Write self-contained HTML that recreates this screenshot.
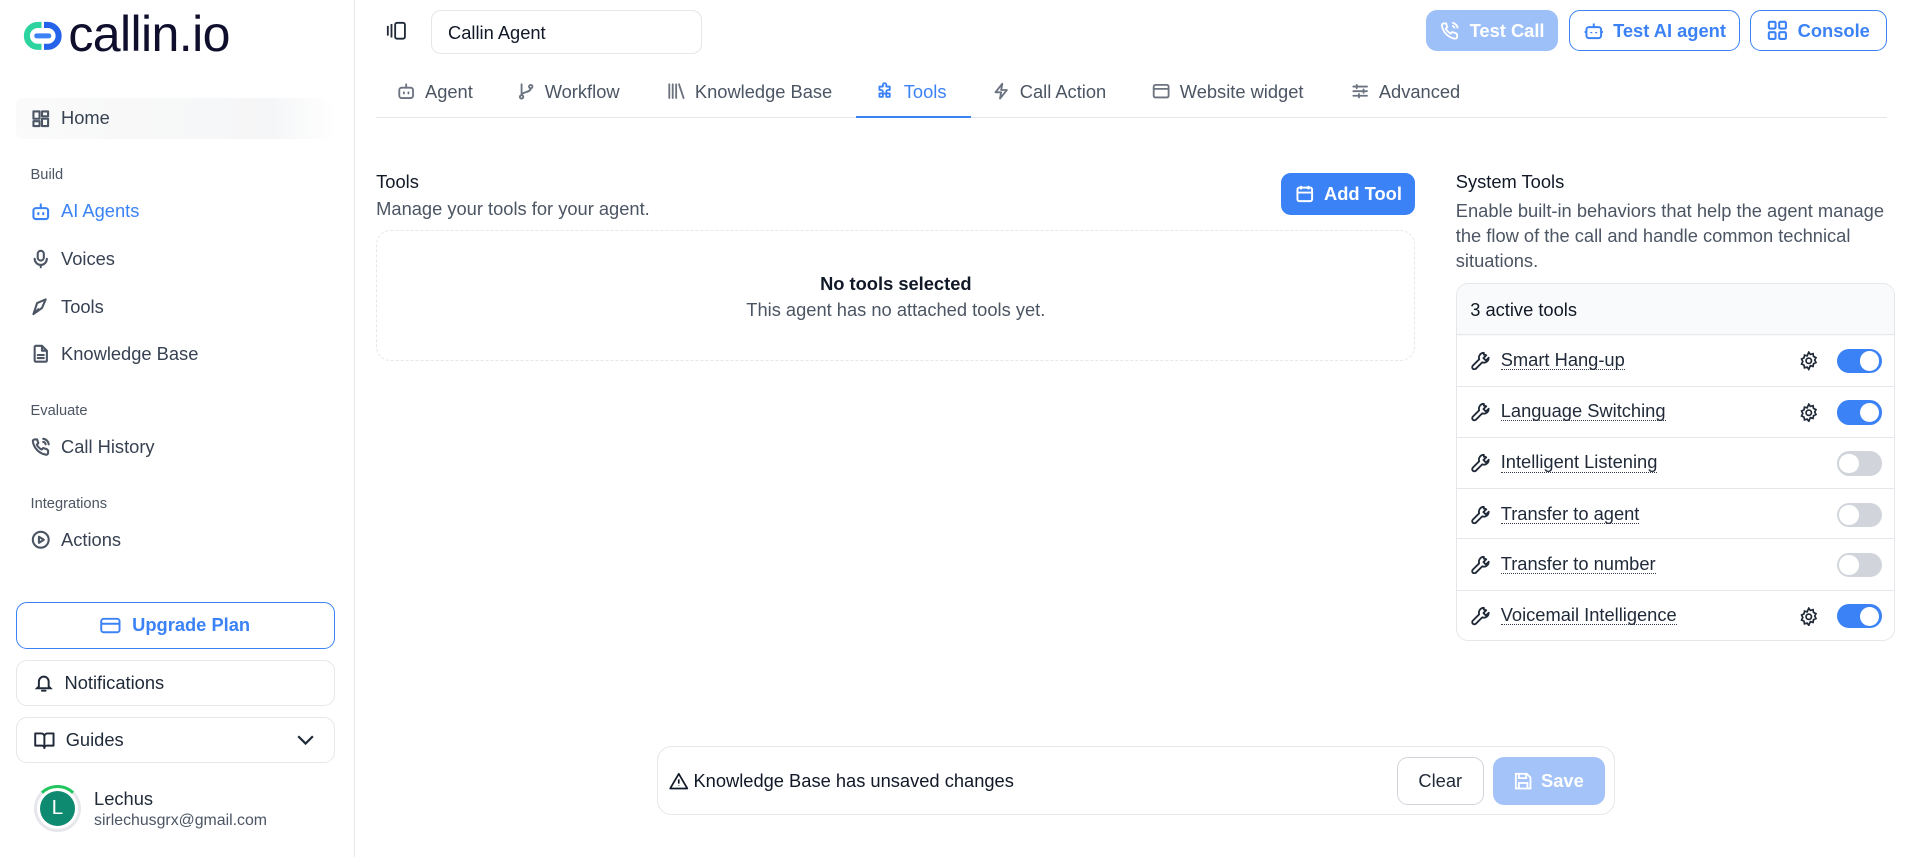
<!DOCTYPE html>
<html><head><meta charset="utf-8"><style>
*{box-sizing:border-box;margin:0;padding:0}
html,body{width:1915px;height:857px;overflow:hidden;background:#fff}
#w{zoom:1.22130;width:1568px;height:702px;position:relative;font-family:"Liberation Sans",sans-serif;color:#1f2937}
.a{position:absolute}
.side{left:0;top:0;width:291px;height:702px;border-right:1px solid #e5e7eb}
.nav{position:absolute;left:25px;font-size:15px;color:#374151;display:flex;align-items:center;gap:9px}
.nav svg{width:16px;height:16px;fill:none;stroke:#4b5563;stroke-width:1.7;stroke-linecap:round;stroke-linejoin:round}
.lbl{position:absolute;left:25px;font-size:12px;color:#4b5563}
.sbtn{position:absolute;left:13px;width:261px;height:38px;border:1px solid #e5e7eb;border-radius:9px;display:flex;align-items:center;padding-left:14px;gap:9px;font-size:15px;color:#1f2937}
.btn{position:absolute;top:8px;height:34px;border-radius:9px;display:flex;align-items:center;justify-content:center;gap:8px;font-size:15px;font-weight:bold}
.ob{border:1px solid #3b82f6;color:#3b82f6}
.tab{position:absolute;top:66px;font-size:15px;color:#4b5563;display:flex;align-items:center;gap:8px}
.tab svg{width:15px;height:15px;fill:none;stroke:#6b7280;stroke-width:1.6;stroke-linecap:round;stroke-linejoin:round}
.row{position:absolute;left:0;width:358px;height:42px;border-top:1px solid #e5e7eb;display:flex;align-items:center;padding-left:12px;font-size:15px;color:#1f2937}
.row .t{margin-left:8px;border-bottom:1.5px dotted #374151;line-height:15px}
.tg{position:absolute;right:10px;top:11px;width:37px;height:20px;border-radius:10px;background:#3b82f6}
.tg::after{content:"";position:absolute;right:2px;top:2px;width:16px;height:16px;border-radius:50%;background:#fff}
.tg.off{background:#d1d5db}.tg.off::after{right:auto;left:2px}
.gear{position:absolute;right:62px;top:13px}
</style></head><body><div id="w">
<div class="a side">
 <div class="a" style="left:18px;top:11px;display:flex;align-items:center;gap:4px">
  <svg width="34" height="26" viewBox="0 0 34 26"><path d="M16 4H13a9 9 0 0 0 0 18h3" fill="none" stroke="#2dd4a0" stroke-width="5"/><path d="M18 4h3a9 9 0 0 1 0 18h-3" fill="none" stroke="#2563eb" stroke-width="5"/><rect x="10" y="11" width="14" height="4" rx="2" fill="#3b82f6"/></svg>
  <span style="font-size:41px;color:#0f0f2d;letter-spacing:-0.5px;line-height:36px">callin.io</span>
 </div>
 <div class="a" style="left:13px;top:80px;width:262px;height:34px;background:linear-gradient(90deg,#fafafa,#f5f6f7 80%,#fff);border-radius:6px"></div>
 <div class="nav" style="top:88px"><svg viewBox="0 0 16 16"><rect x="2" y="2" width="5" height="6"/><rect x="9" y="2" width="5" height="4"/><rect x="2" y="10" width="5" height="4"/><rect x="9" y="8" width="5" height="6"/></svg>Home</div>
 <div class="lbl" style="top:137px">Build</div>
 <div class="nav" style="top:164px;color:#3b82f6"><svg viewBox="0 0 16 16" style="stroke:#3b82f6"><rect x="2" y="5" width="12" height="9" rx="2"/><path d="M8 2v3M6 9v1M10 9v1"/></svg>AI Agents</div>
 <div class="nav" style="top:203px"><svg viewBox="0 0 16 16"><rect x="5.5" y="1.5" width="5" height="8" rx="2.5"/><path d="M3 8a5 5 0 0 0 10 0M8 13v2"/></svg>Voices</div>
 <div class="nav" style="top:242px"><svg viewBox="0 0 16 16"><path d="M2 14l3-9 7-3-3 7-7 5zM2 14l4-4"/></svg>Tools</div>
 <div class="nav" style="top:281px"><svg viewBox="0 0 16 16"><path d="M9 1.5H4a1 1 0 0 0-1 1v11a1 1 0 0 0 1 1h8a1 1 0 0 0 1-1V5.5zM9 1.5v4h4M5.5 9h5M5.5 11.5h5"/></svg>Knowledge Base</div>
 <div class="lbl" style="top:330px">Evaluate</div>
 <div class="nav" style="top:357px"><svg viewBox="0 0 16 16"><path d="M14 11v2a1.5 1.5 0 0 1-1.6 1.5A13 13 0 0 1 1.5 3.6 1.5 1.5 0 0 1 3 2h2l1 3-1.3 1.3a10 10 0 0 0 4 4L10 9l3 1zM10 1.5a5 5 0 0 1 4.5 4.5M10 4a2.5 2.5 0 0 1 2 2"/></svg>Call History</div>
 <div class="lbl" style="top:406px">Integrations</div>
 <div class="nav" style="top:433px"><svg viewBox="0 0 16 16"><circle cx="8" cy="8" r="6.5"/><path d="M6.5 5.5l4 2.5-4 2.5z"/></svg>Actions</div>
 <div class="sbtn" style="top:493px;border-color:#3b82f6;color:#3b82f6;justify-content:center;padding:0;font-weight:bold"><svg width="17" height="14" viewBox="0 0 17 14" fill="none" stroke="#3b82f6" stroke-width="1.6"><rect x="1" y="1.5" width="15" height="11" rx="2"/><path d="M1 5.5h15"/></svg>Upgrade Plan</div>
 <div class="sbtn" style="top:540px"><svg width="16" height="16" viewBox="0 0 16 16" fill="none" stroke="#1f2937" stroke-width="1.6" stroke-linecap="round"><path d="M4 11V7a4 4 0 0 1 8 0v4l1.5 1.5h-11zM6.5 14.5h3"/></svg>Notifications</div>
 <div class="sbtn" style="top:587px"><svg width="17" height="15" viewBox="0 0 17 15" fill="none" stroke="#1f2937" stroke-width="1.6" stroke-linejoin="round"><path d="M1 2h5a2.5 2.5 0 0 1 2.5 2.5V14A2 2 0 0 0 6.5 12H1zM16 2h-5a2.5 2.5 0 0 0-2.5 2.5V14a2 2 0 0 1 2-2H16z"/></svg>Guides<svg style="position:absolute;right:16px;top:14px" width="14" height="9" viewBox="0 0 14 9" fill="none" stroke="#1f2937" stroke-width="1.8"><path d="M1 1l6 6 6-6"/></svg></div>
 <div class="a" style="left:28px;top:643px;width:38px;height:38px;border-radius:50%;border:3px solid #e5e7eb;border-top-color:#22c55e;padding:2px"><div style="width:100%;height:100%;border-radius:50%;background:#0e8a70;color:#fff;font-size:17px;display:flex;align-items:center;justify-content:center">L</div></div>
 <div class="a" style="left:77px;top:645px;font-size:15px;color:#1f2937">Lechus</div>
 <div class="a" style="left:77px;top:665px;font-size:13px;color:#4b5563">sirlechusgrx@gmail.com</div>
</div>

<svg class="a" style="left:316px;top:17px" width="17" height="16" viewBox="0 0 17 16" fill="none" stroke="#1f2937" stroke-width="1.5"><path d="M1.5 4v8M4.5 2.5v11"/><rect x="7.5" y="1.5" width="8" height="13" rx="1.5"/></svg>
<div class="a" style="left:353px;top:8px;width:222px;height:36px;border:1px solid #e5e7eb;border-radius:8px;padding:9px 13px;font-size:15px;color:#111827">Callin Agent</div>
<div class="btn" style="left:1168px;width:108px;background:#9ec0f9;color:#fff"><svg width="16" height="16" viewBox="0 0 16 16" fill="none" stroke="#fff" stroke-width="1.5"><path d="M14 11v2a1.5 1.5 0 0 1-1.6 1.5A13 13 0 0 1 1.5 3.6 1.5 1.5 0 0 1 3 2h2l1 3-1.3 1.3a10 10 0 0 0 4 4L10 9l3 1zM10 1.5a5 5 0 0 1 4.5 4.5M10 4a2.5 2.5 0 0 1 2 2"/></svg>Test Call</div>
<div class="btn ob" style="left:1285px;width:140px"><svg width="16" height="16" viewBox="0 0 16 16" fill="none" stroke="#3b82f6" stroke-width="1.6"><rect x="2" y="5" width="12" height="9" rx="2"/><path d="M8 2v3M6 9v1M10 9v1M0.5 9h1.5M14 9h1.5"/></svg>Test AI agent</div>
<div class="btn ob" style="left:1433px;width:112px"><svg width="17" height="17" viewBox="0 0 17 17" fill="none" stroke="#3b82f6" stroke-width="1.7"><rect x="1.5" y="1.5" width="5.5" height="5.5" rx="1"/><rect x="10" y="1.5" width="5.5" height="5.5" rx="1"/><rect x="1.5" y="10" width="5.5" height="5.5" rx="1"/><rect x="10" y="10" width="5.5" height="5.5" rx="1"/></svg>Console</div>

<div class="a" style="left:308px;top:96px;width:1237px;height:1px;background:#e5e7eb"></div>
<div class="tab" style="left:325px"><svg viewBox="0 0 16 16"><rect x="2" y="5" width="12" height="9" rx="2"/><path d="M8 2v3M6 9v1M10 9v1"/></svg>Agent</div>
<div class="tab" style="left:423px"><svg viewBox="0 0 16 16"><circle cx="4" cy="13" r="1.5"/><circle cx="12" cy="4" r="1.5"/><path d="M4 2v9.5M12 5.5c0 4-8 3-8 6"/></svg>Workflow</div>
<div class="tab" style="left:546px"><svg viewBox="0 0 16 16"><path d="M2 2v12M5 2v12M8 2v12M10.5 2l4 12"/></svg>Knowledge Base</div>
<div class="tab" style="left:717px;color:#3b82f6"><svg viewBox="0 0 16 16" style="stroke:#3b82f6"><path d="M6 2.5a1.5 1.5 0 0 1 3 0V4h3v3h-1.5a1.5 1.5 0 0 0 0 3H12v3H9v-1.5a1.5 1.5 0 0 0-3 0V13H3v-3h1.5a1.5 1.5 0 0 0 0-3H3V4h3z"/></svg>Tools</div>
<div class="a" style="left:701px;top:95px;width:94px;height:2px;background:#3b82f6"></div>
<div class="tab" style="left:812px"><svg viewBox="0 0 16 16"><path d="M9 1.5L3 9h5l-1 5.5L13 7H8z"/></svg>Call Action</div>
<div class="tab" style="left:943px"><svg viewBox="0 0 16 16"><rect x="1.5" y="2.5" width="13" height="11" rx="1.5"/><path d="M1.5 6h13"/></svg>Website widget</div>
<div class="tab" style="left:1106px"><svg viewBox="0 0 16 16"><path d="M2 4h12M2 8h12M2 12h12M5 2.5v3M11 6.5v3M7 10.5v3"/></svg>Advanced</div>

<div class="a" style="left:308px;top:140px;font-size:15px;color:#111827">Tools</div>
<div class="a" style="left:308px;top:162px;font-size:15px;color:#4b5563">Manage your tools for your agent.</div>
<div class="a" style="left:1049px;top:142px;width:110px;height:34px;background:#3b82f6;border-radius:8px;color:#fff;font-size:15px;font-weight:bold;display:flex;align-items:center;justify-content:center;gap:8px"><svg width="16" height="16" viewBox="0 0 16 16" fill="none" stroke="#fff" stroke-width="1.6"><rect x="2" y="3" width="12" height="11" rx="1.5"/><path d="M2 7h12M5 1.5v3M11 1.5v3"/></svg>Add Tool</div>
<div class="a" style="left:308px;top:188px;width:851px;height:108px;border:1.5px dashed #e5e7eb;border-radius:12px;text-align:center;padding-top:35px">
 <div style="font-size:15px;font-weight:bold;color:#111827">No tools selected</div>
 <div style="font-size:15px;color:#4b5563;margin-top:3px">This agent has no attached tools yet.</div>
</div>

<div class="a" style="left:1192px;top:140px;font-size:15px;color:#111827">System Tools</div>
<div class="a" style="left:1192px;top:162px;width:365px;font-size:15px;line-height:20.5px;color:#4b5563">Enable built-in behaviors that help the agent manage the flow of the call and handle common technical situations.</div>
<div class="a" style="left:1192px;top:232px;width:360px;height:293px;border:1px solid #e5e7eb;border-radius:10px;overflow:hidden">
 <div style="height:42px;background:#f9fafb;padding:12px 11px;font-size:15px;color:#111827">3 active tools</div>
 <div class="row" style="top:41px"><svg width="16" height="16" viewBox="0 0 16 16" fill="none" stroke="#1f2937" stroke-width="1.5" stroke-linejoin="round"><path d="M10.5 1.5a4 4 0 0 0-3.8 5.3L1.5 12a1.5 1.5 0 0 0 2.5 2.5l5.2-5.2A4 4 0 0 0 14.5 5.5l-2.3 2.3-2-2 2.3-2.3a4 4 0 0 0-2-0.5z"/></svg><span class="t">Smart Hang-up</span><svg class="gear" width="16" height="16" viewBox="0 0 16 16" fill="none" stroke="#1f2937" stroke-width="1.4"><circle cx="8" cy="8" r="2.2"/><path d="M8 1l1.3 1.8 2.2-.6.4 2.2 2 1-1 2 1 2-2 1-.4 2.2-2.2-.6L8 15l-1.3-1.8-2.2.6-.4-2.2-2-1 1-2-1-2 2-1 .4-2.2 2.2.6z"/></svg><div class="tg"></div></div>
 <div class="row" style="top:83px"><svg width="16" height="16" viewBox="0 0 16 16" fill="none" stroke="#1f2937" stroke-width="1.5" stroke-linejoin="round"><path d="M10.5 1.5a4 4 0 0 0-3.8 5.3L1.5 12a1.5 1.5 0 0 0 2.5 2.5l5.2-5.2A4 4 0 0 0 14.5 5.5l-2.3 2.3-2-2 2.3-2.3a4 4 0 0 0-2-0.5z"/></svg><span class="t">Language Switching</span><svg class="gear" width="16" height="16" viewBox="0 0 16 16" fill="none" stroke="#1f2937" stroke-width="1.4"><circle cx="8" cy="8" r="2.2"/><path d="M8 1l1.3 1.8 2.2-.6.4 2.2 2 1-1 2 1 2-2 1-.4 2.2-2.2-.6L8 15l-1.3-1.8-2.2.6-.4-2.2-2-1 1-2-1-2 2-1 .4-2.2 2.2.6z"/></svg><div class="tg"></div></div>
 <div class="row" style="top:125px"><svg width="16" height="16" viewBox="0 0 16 16" fill="none" stroke="#1f2937" stroke-width="1.5" stroke-linejoin="round"><path d="M10.5 1.5a4 4 0 0 0-3.8 5.3L1.5 12a1.5 1.5 0 0 0 2.5 2.5l5.2-5.2A4 4 0 0 0 14.5 5.5l-2.3 2.3-2-2 2.3-2.3a4 4 0 0 0-2-0.5z"/></svg><span class="t">Intelligent Listening</span><div class="tg off"></div></div>
 <div class="row" style="top:167px"><svg width="16" height="16" viewBox="0 0 16 16" fill="none" stroke="#1f2937" stroke-width="1.5" stroke-linejoin="round"><path d="M10.5 1.5a4 4 0 0 0-3.8 5.3L1.5 12a1.5 1.5 0 0 0 2.5 2.5l5.2-5.2A4 4 0 0 0 14.5 5.5l-2.3 2.3-2-2 2.3-2.3a4 4 0 0 0-2-0.5z"/></svg><span class="t">Transfer to agent</span><div class="tg off"></div></div>
 <div class="row" style="top:208px"><svg width="16" height="16" viewBox="0 0 16 16" fill="none" stroke="#1f2937" stroke-width="1.5" stroke-linejoin="round"><path d="M10.5 1.5a4 4 0 0 0-3.8 5.3L1.5 12a1.5 1.5 0 0 0 2.5 2.5l5.2-5.2A4 4 0 0 0 14.5 5.5l-2.3 2.3-2-2 2.3-2.3a4 4 0 0 0-2-0.5z"/></svg><span class="t">Transfer to number</span><div class="tg off"></div></div>
 <div class="row" style="top:250px"><svg width="16" height="16" viewBox="0 0 16 16" fill="none" stroke="#1f2937" stroke-width="1.5" stroke-linejoin="round"><path d="M10.5 1.5a4 4 0 0 0-3.8 5.3L1.5 12a1.5 1.5 0 0 0 2.5 2.5l5.2-5.2A4 4 0 0 0 14.5 5.5l-2.3 2.3-2-2 2.3-2.3a4 4 0 0 0-2-0.5z"/></svg><span class="t">Voicemail Intelligence</span><svg class="gear" width="16" height="16" viewBox="0 0 16 16" fill="none" stroke="#1f2937" stroke-width="1.4"><circle cx="8" cy="8" r="2.2"/><path d="M8 1l1.3 1.8 2.2-.6.4 2.2 2 1-1 2 1 2-2 1-.4 2.2-2.2-.6L8 15l-1.3-1.8-2.2.6-.4-2.2-2-1 1-2-1-2 2-1 .4-2.2 2.2.6z"/></svg><div class="tg"></div></div>
</div>

<div class="a" style="left:538px;top:611px;width:784px;height:56px;border:1px solid #e5e7eb;border-radius:12px">
 <div class="a" style="left:9px;top:19px;font-size:15px;color:#111827;display:flex;align-items:center;gap:4px"><svg width="16" height="15" viewBox="0 0 16 15" fill="none" stroke="#111827" stroke-width="1.4" stroke-linejoin="round"><path d="M8 1.5L1 13.5h14zM8 6v3.5M8 11.2v.3"/></svg>Knowledge Base has unsaved changes</div>
 <div class="a" style="left:605px;top:8px;width:71px;height:39px;border:1px solid #d1d5db;border-radius:9px;font-size:15px;color:#1f2937;display:flex;align-items:center;justify-content:center">Clear</div>
 <div class="a" style="left:684px;top:8px;width:91px;height:39px;background:#a3c3f9;border-radius:9px;font-size:15px;font-weight:bold;color:#fff;display:flex;align-items:center;justify-content:center;gap:7px"><svg width="15" height="15" viewBox="0 0 15 15" fill="none" stroke="#fff" stroke-width="1.5"><path d="M1.5 1.5h9l3 3v9h-12z"/><path d="M4 1.5v3.5h6V1.5M4 13.5V9h7v4.5"/></svg>Save</div>
</div>
</div></body></html>
